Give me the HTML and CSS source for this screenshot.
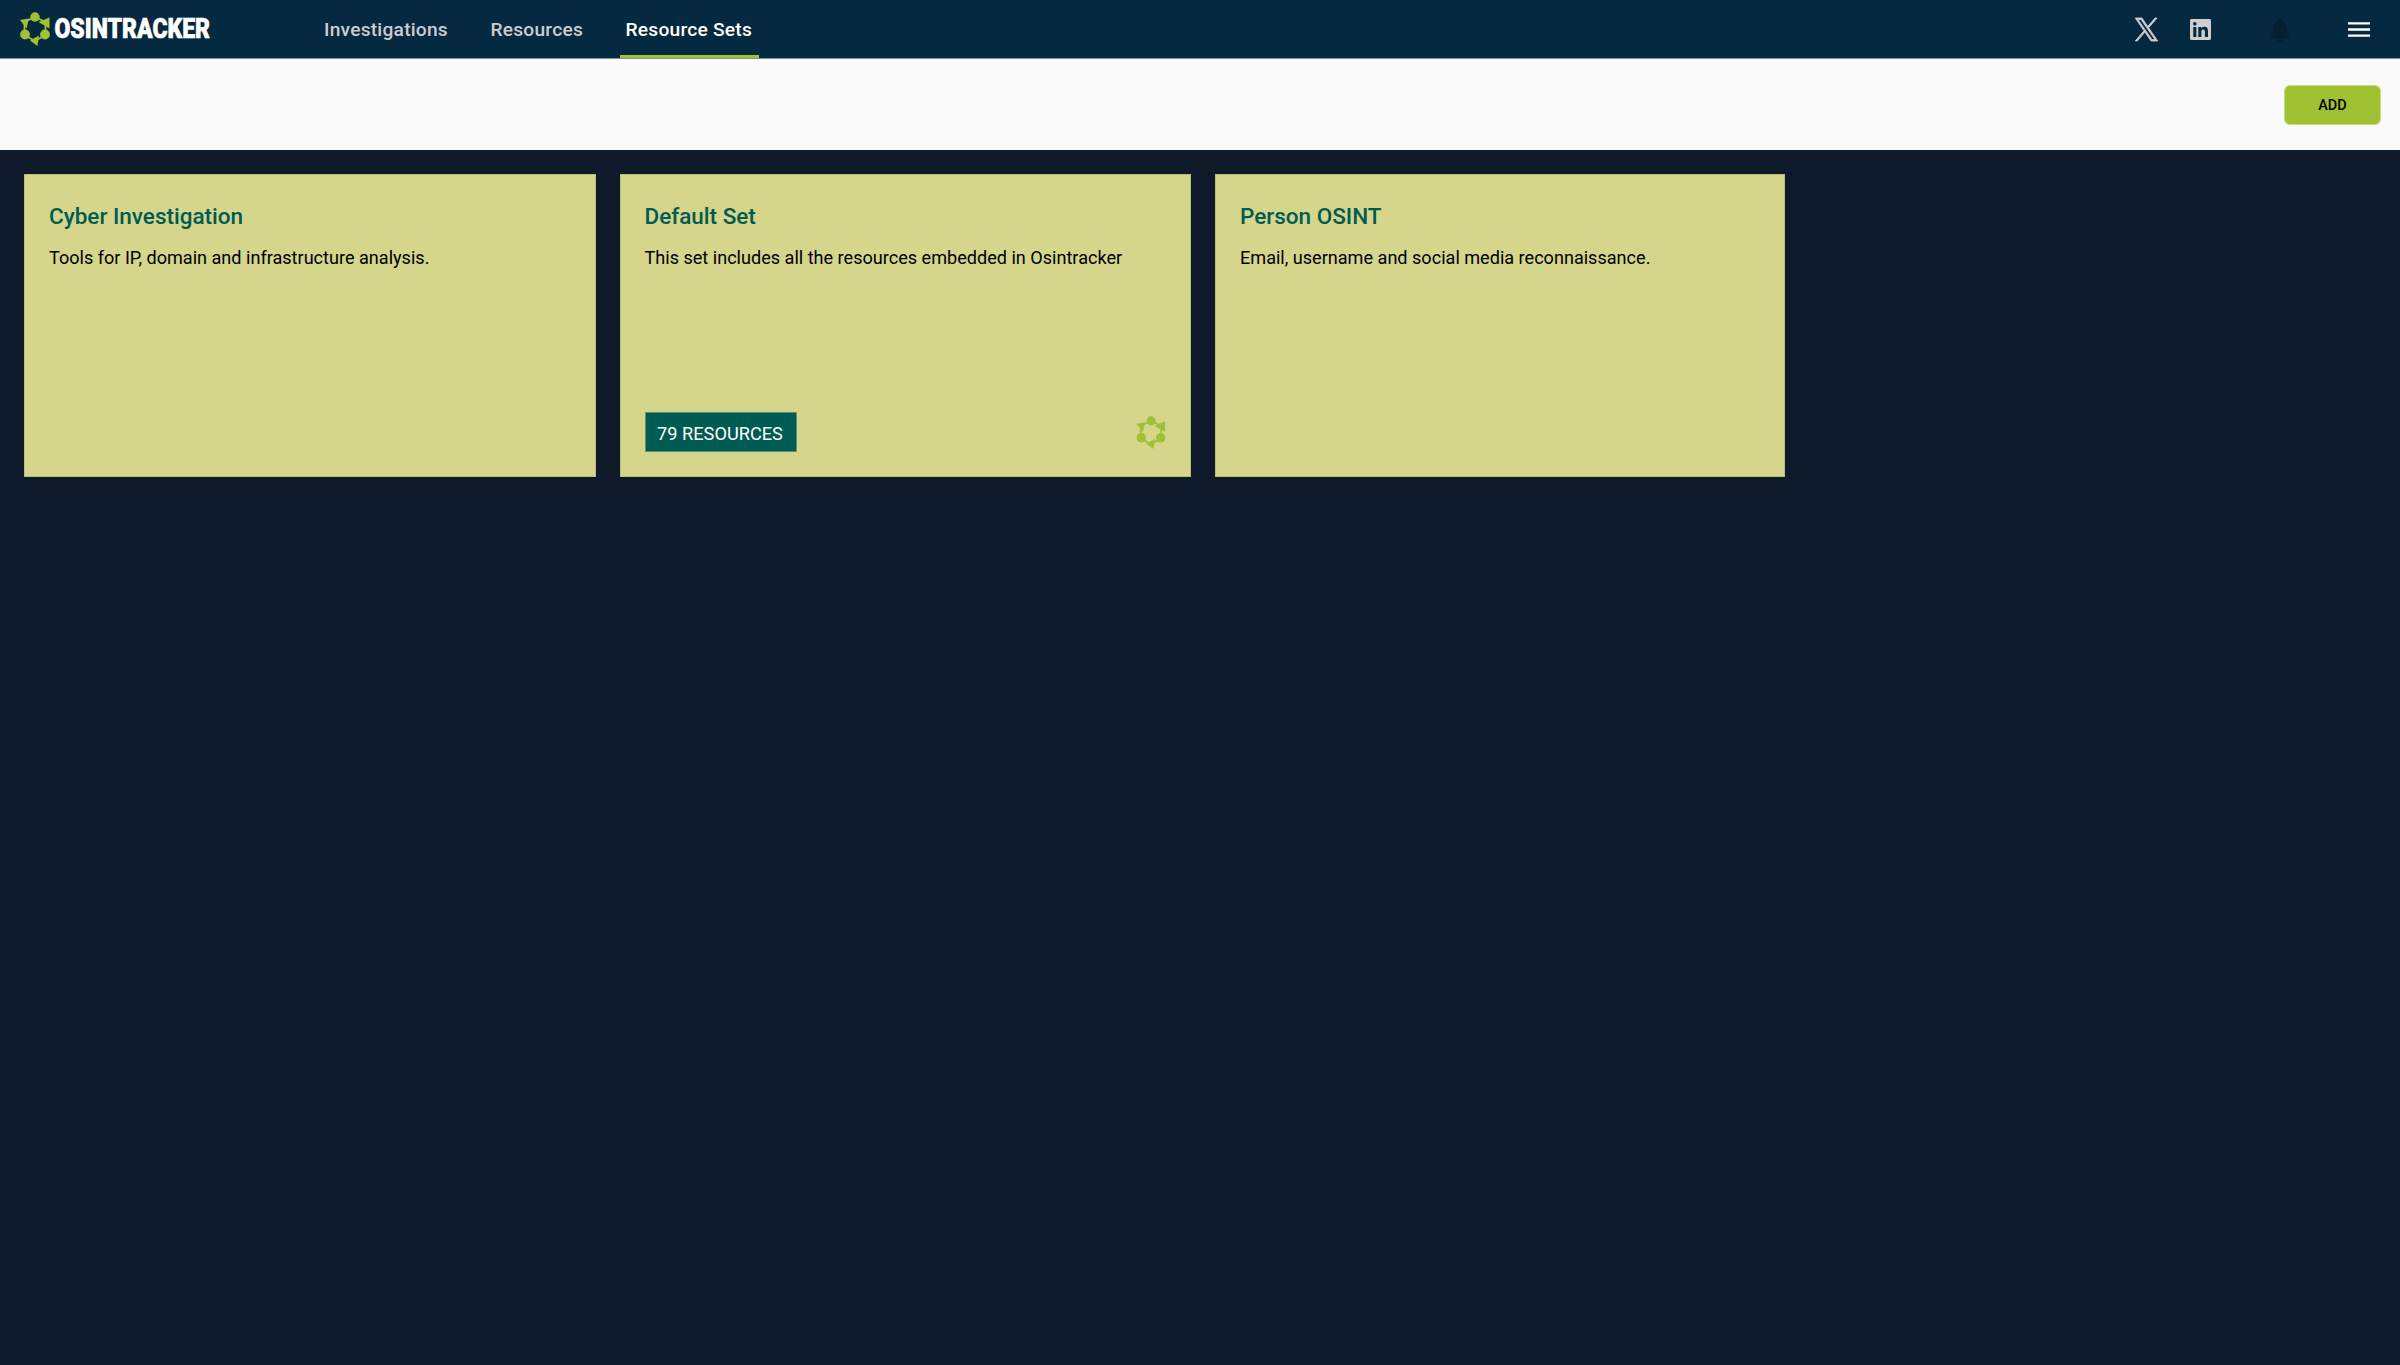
FILE: index.html
```html
<!DOCTYPE html>
<html lang="en">
<head>
<meta charset="utf-8">
<title>Osintracker</title>
<link rel="stylesheet" href="styles.css">
</head>
<body>
<svg width="0" height="0" class="sprite" aria-hidden="true">
  <symbol id="ring" viewBox="0 0 30 34">
    <path d="M15 5 25.500 10V23L15 29 4.500 23V10Z" fill="none" stroke="currentColor" stroke-width="1.800"/>
    <circle cx="15" cy="5" r="4.700"/><circle cx="5" cy="22.500" r="4.900"/><circle cx="25" cy="22.500" r="4.900"/>
    <path d="M0 8 9 6.500 6.500 16.500ZM29.500 5.500V16.500L18.500 10ZM10 28.500 19 23.500 17.500 34Z"/>
  </symbol>
</svg>
<header class="topbar">
  <a class="brand">
    <svg class="brand-icon"><use href="#ring"/></svg>
    <svg class="brand-name" width="160" height="40" viewBox="0 0 160 40"><text x="0.500" y="29.500" textLength="155.500" lengthAdjust="spacingAndGlyphs">OSINTRACKER</text></svg>
  </a>
  <nav class="nav">
    <a class="nav-link">Investigations</a>
    <a class="nav-link">Resources</a>
    <a class="nav-link active">Resource Sets</a>
  </nav>
  <div class="tools">
    <svg class="x-icon" viewBox="0 0 24 24"><path d="M14.234 10.162 22.977 0h-2.072l-7.591 8.824L7.251 0H.258l9.168 13.343L.258 24H2.330l8.016-9.318L16.749 24h6.993zm-2.837 3.299-.929-1.329L3.076 1.560h3.182l5.965 8.532.929 1.329 7.754 11.090h-3.182z"/></svg>
    <svg class="in-icon" viewBox="0 0 448 448"><path d="M416 0H31.900C14.300 0 0 14.500 0 32.300v383.400C0 433.500 14.300 448 31.900 448H416c17.600 0 32-14.500 32-32.300V32.300C448 14.500 433.600 0 416 0zM135.400 384H69V170.200h66.500V384zM102.200 141c-21.300 0-38.500-17.300-38.500-38.500S80.900 64 102.200 64c21.200 0 38.500 17.300 38.500 38.500 0 21.300-17.200 38.500-38.500 38.500zm282.100 243h-66.400V280c0-24.800-.5-56.700-34.500-56.700-34.600 0-39.900 27-39.900 54.900V384h-66.400V170.200h63.700v29.200h.9c8.900-16.800 30.600-34.500 62.900-34.500 67.200 0 79.700 44.300 79.700 101.900V384z"/></svg>
    <svg class="bell-icon" viewBox="4 2 16 20"><path d="M12 22c1.100 0 2-.9 2-2h-4a2 2 0 0 0 2 2zm6-6v-5c0-3.070-1.640-5.640-4.500-6.320V4c0-.83-.67-1.500-1.500-1.500s-1.500.67-1.500 1.500v.68C7.630 5.360 6 7.920 6 11v5l-2 2v1h16v-1l-2-2z"/></svg>
    <svg class="menu-icon" viewBox="3 6 18 12"><path d="M3 18h18v-2H3v2zm0-5h18v-2H3v2zm0-7v2h18V6H3z"/></svg>
  </div>
</header>
<section class="actions"><button class="add">ADD</button></section>
<main class="sets">
  <article class="card">
    <h2>Cyber Investigation</h2>
    <p>Tools for IP, domain and infrastructure analysis.</p>
  </article>
  <article class="card">
    <h2>Default Set</h2>
    <p>This set includes all the resources embedded in Osintracker</p>
    <footer><span class="badge">79 RESOURCES</span><svg class="card-icon"><use href="#ring"/></svg></footer>
  </article>
  <article class="card">
    <h2>Person OSINT</h2>
    <p>Email, username and social media reconnaissance.</p>
  </article>
</main>
</body>
</html>
```
FILE: styles.css
```css
* { box-sizing: border-box; }
body { margin: 0; min-height: 1365px; background: #0e192a; font-family: Roboto, sans-serif; color: #000; display: flex; flex-direction: column; }
.sprite { position: absolute; }
.topbar { height: 59px; background: #052940; border-bottom: 1px solid #7b929f; display: flex; align-items: stretch; }
.brand { display: flex; align-items: center; width: 300px; padding-left: 20px; }
.brand-icon { width: 30px; height: 34px; color: #a0c131; fill: #a0c131; margin-top: -1px; }
.brand-name { margin-left: 4px; margin-top: -2px; overflow: visible; }
.brand-name text { font: 900 27px Roboto, sans-serif; fill: #fff; stroke: #fff; stroke-width: 0.6px; }
.nav { display: flex; gap: 30.5px; padding-left: 18px; }
.nav-link { display: flex; align-items: center; height: 58px; padding: 3px 6px 0; border-bottom: 3px solid transparent; font-size: 19.2px; font-weight: 500; letter-spacing: 0.22px; color: #cdcdcd; white-space: nowrap; }
.nav-link.active { color: #fff; border-color: #a0c131; padding-right: 7px; }
.tools { margin-left: auto; display: flex; align-items: center; padding: 1px 30px 0 0; fill: #cdcdcd; }
.x-icon { width: 23px; height: 23px; margin-right: 32px; overflow: visible; stroke: #cdcdcd; stroke-width: 0.9; }
.in-icon { width: 21px; height: 21px; margin-right: 59px; }
.bell-icon { width: 20px; height: 24px; margin-right: 58px; fill: #04202f; }
.menu-icon { width: 22px; height: 15px; fill: #fff; }
.actions { height: 91px; background: #fafafa; display: flex; justify-content: flex-end; align-items: center; padding-right: 19px; }
.add { width: 97px; height: 40px; border: 1px solid #c8dc85; border-radius: 6px; background: #a0c131; font: 500 14.4px Roboto, sans-serif; color: #000; padding: 1px 0 0; }
.sets { display: grid; grid-template-columns: 571.5px 571.5px 570px; gap: 24px; padding: 24px; }
.card { height: 303px; background: #d5d58c; border: 1px solid #bcbc7c; padding: 24px; display: flex; flex-direction: column; }
h2 { margin: 3px 0 0; font-size: 22.5px; line-height: 28px; font-weight: 500; color: #005b52; }
p { margin: 14px 0 0; font-size: 18.08px; line-height: 27px; }
footer { margin-top: auto; display: flex; justify-content: space-between; align-items: center; }
.badge { width: 152px; height: 40px; border: 1px solid #5f9270; background: #005b52; color: #fff; font-size: 18.2px; display: flex; align-items: center; justify-content: center; padding: 3px 1px 0 0; }
.card-icon { width: 30px; height: 33px; color: #a0c131; fill: #a0c131; }
```
